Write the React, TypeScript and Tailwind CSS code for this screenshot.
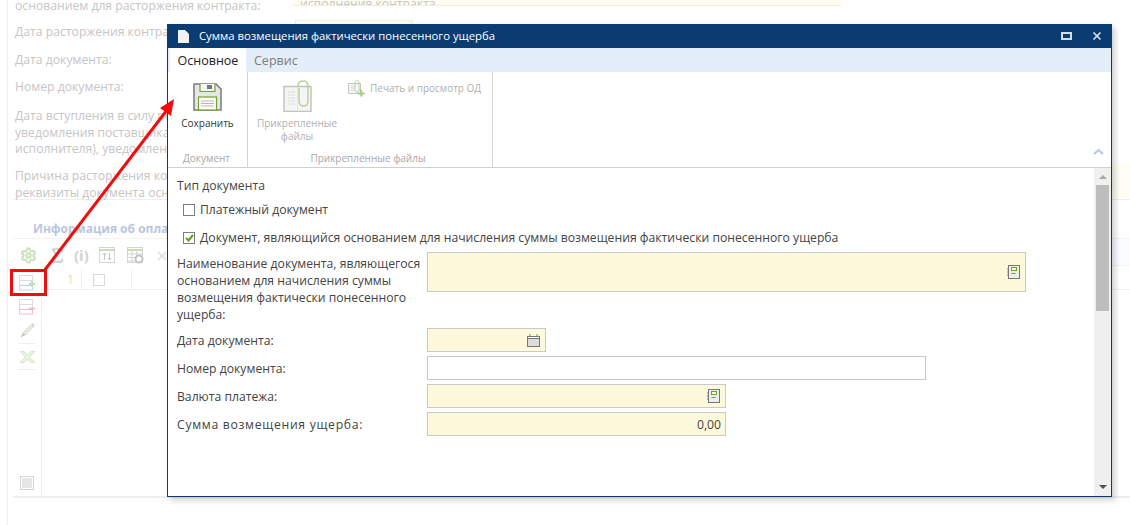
import { Settings, Sigma, X } from "lucide-react";

function BookIcon() {
  return (
    <svg width="14" height="15" viewBox="0 0 14 15" fill="none">
      <rect x="1.500" y="0.500" width="11" height="13" fill="#eeeeee" stroke="#777777" />
      <path d="M0 4h2M0 7h2M0 10h2" stroke="#777777" />
      <rect x="4.500" y="2.500" width="5" height="3" fill="#ffffff" stroke="#6aa51e" />
      <path d="M4.500 8.500h4" stroke="#6aa51e" />
    </svg>
  );
}

function CalendarIcon() {
  return (
    <svg width="13" height="13" viewBox="0 0 13 13" fill="none">
      <rect x="0.500" y="2.500" width="12" height="10" fill="#ffffff" stroke="#777777" />
      <rect x="1" y="5" width="11" height="7" fill="#dddddd" />
      <path d="M0.500 4.500h12" stroke="#777777" />
      <path d="M3 0v2.500M10 0v2.500" stroke="#6aa51e" />
    </svg>
  );
}

function SaveIcon() {
  return (
    <svg width="29" height="28" viewBox="0 0 29 28" fill="none">
      <path d="M1 1h22l5 5v21H1z" fill="#e6e6e6" stroke="#7b7b7b" strokeWidth="1.500" />
      <path d="M7 1v7.500h15V1" fill="#f5f5f5" stroke="#6fa52a" strokeWidth="1.200" />
      <rect x="14" y="2" width="5" height="4" fill="#777777" />
      <rect x="5.500" y="14" width="18" height="13" fill="#ffffff" stroke="#6fa52a" strokeWidth="1.200" />
      <path d="M8 18h13M8 20.500h13M8 23h13" stroke="#b5b5b5" />
    </svg>
  );
}

function ClipIcon() {
  return (
    <svg width="29" height="32" viewBox="0 0 29 32" fill="none">
      <path d="M1 6.500h27v25H1z" fill="#f5f5f5" stroke="#c3c3c3" strokeWidth="1.500" />
      <path d="M14.500 7v24" stroke="#e4e4e4" />
      <path d="M5 12h7M5 15h7M5 18h7M5 21h7M5 24h7" stroke="#dedede" />
      <path
        d="M15 6c0-3 2-5 5-5s5 2 5 5v15c0 3-2 5-4.500 5S16 24 16 21V8"
        fill="none"
        stroke="#b5d49a"
        strokeWidth="1.500"
      />
    </svg>
  );
}

function SmallClipIcon() {
  return (
    <svg width="17" height="17" viewBox="0 0 17 17" fill="none">
      <path d="M0.500 3.500h12v10h-12z" fill="#f7f7f7" stroke="#c3c3c3" />
      <path d="M2.500 6h4M2.500 8h4M2.500 10h4" stroke="#d8d8d8" />
      <path d="M7 3c0-1.500 1-2.500 2-2.500s2 1 2 2.500v7c0 1-.5 2-2 2S7 11 7 10V4" stroke="#b5d49a" />
      <path d="M10 13.500h6.500M13.250 10v6.500" stroke="#a5d07c" strokeWidth="2" />
    </svg>
  );
}

function RowsIcon({ accent, sign }: { accent: string; sign: "plus" | "minus" }) {
  return (
    <svg width="16" height="16" viewBox="0 0 16 16" fill="none">
      <rect x="0.500" y="0.500" width="13" height="5" stroke="#dcdcdc" />
      <rect x="0.500" y="5.500" width="13" height="5" stroke="#dcdcdc" />
      <rect x="0.500" y="10.500" width="13" height="4.500" stroke={accent} />
      {sign === "plus" ? (
        <path d="M10 9h6M13 6v6" stroke="#c4dfa8" strokeWidth="2" />
      ) : (
        <path d="M10 9.500h6" stroke="#f3bcc4" strokeWidth="2" />
      )}
    </svg>
  );
}

function PencilIcon() {
  return (
    <svg width="15" height="15" viewBox="0 0 15 15" fill="none">
      <path d="M3 9.500 10.500 2l2.500 2.500L5.500 12z" fill="#e2eed6" stroke="#c8c8c8" strokeWidth="0.500" />
      <path d="m11 1.500 1.500-1 2 2-1 1.500z" fill="#f3b5b5" />
      <path d="M3 9.500 5.500 12 .5 14.500z" fill="#c4c4c4" />
    </svg>
  );
}

function ExcelIcon() {
  return (
    <svg width="17" height="12" viewBox="0 0 17 12" fill="none">
      <path d="M1 .5h4l3.500 3.500L12 .5h4L10.500 6l5.500 5.500h-4L8.500 8 5 11.500H1L6.500 6z" fill="#eaf2e1" stroke="#d5e5c5" />
    </svg>
  );
}

function GridIcon({ arrows }: { arrows?: boolean }) {
  return (
    <svg width="17" height="17" viewBox="0 0 17 17" fill="none">
      <rect x="0.500" y="0.500" width="15" height="15" fill="#ffffff" stroke="#d4d4d4" />
      <path d="M1 3h14" stroke="#c8deb0" strokeWidth="2" />
      {arrows ? (
        <path d="M5.500 13V6M3.500 8l2-2 2 2M10.500 6v7M8.500 11l2 2 2-2" stroke="#c4c4c4" />
      ) : (
        <>
          <path d="M1 7h14M1 10.500h14M1 14h14M5 4v11M9.500 4v11" stroke="#d4d4d4" />
          <circle cx="12" cy="12" r="3.500" fill="#ffffff" stroke="#c4c4c4" strokeWidth="2" />
        </>
      )}
    </svg>
  );
}

function Field({ className, children }: { className: string; children?: React.ReactNode }) {
  return (
    <div className={`flex h-6 items-center justify-end border border-[#c9c9c9] pr-[4px] ${className}`}>
      {children}
    </div>
  );
}

function FormRow({ label, labelClass, children }: { label: string; labelClass?: string; children: React.ReactNode }) {
  return (
    <div className="flex items-center">
      <div className={`w-[250px] shrink-0 whitespace-nowrap ${labelClass ?? ""}`}>{label}</div>
      {children}
    </div>
  );
}

function Background() {
  return (
    <div className="ml-[7px] flex h-[525px] flex-col border-l border-[#f1f1f1] pl-[5px] text-[12.200px] text-[#c6c6c6]">
      <div className="flex h-[18px] items-start">
        <div className="w-[280px] shrink-0 pl-[2px] leading-[12px]">основанием для расторжения контракта:</div>
        <div className="h-[6px] w-[548px] overflow-hidden border-b border-[#f1eed9] bg-[#fffdf2] pl-[7px] leading-[8px]">
          исполнения контракта
        </div>
      </div>
      <div className="flex h-[28px] items-center pl-[2px]">
        <div className="w-[280px] shrink-0 whitespace-nowrap">Дата расторжения контракта:</div>
        <div className="h-[24px] w-[118px] border border-[#f1eed9] bg-[#fffdf2]" />
      </div>
      <div className="flex h-[28px] items-center pl-[2px]">Дата документа:</div>
      <div className="flex h-[27px] items-center pl-[2px]">Номер документа:</div>
      <div className="h-[62px] pt-[7px] pl-[2px] leading-[16.500px] whitespace-nowrap">
        Дата вступления в силу решения
        <br />
        уведомления поставщика (подрядчика,
        <br />
        исполнителя), уведомления заказчика
      </div>
      <div className="flex h-[37px] border-b border-[#efefef]">
        <div className="w-[1099px] shrink-0 pt-[5px] pl-[2px] leading-[16.500px] whitespace-nowrap">
          Причина расторжения контракта,
          <br />
          реквизиты документа основания
        </div>
        <div className="flex-1 bg-[#fffef5]" />
      </div>
      <div className="flex h-[38px] items-end pl-[20px] text-[12px] leading-[18px] font-bold text-[#b9c7de]">
        Информация об оплате
      </div>
      <div className="flex h-[32px]">
        <div className="flex w-[1099px] shrink-0 items-center border-t border-[#f2f2f2] pt-[2px] pl-[7px]">
          <Settings size={17} strokeWidth={3} className="text-[#cfe0bd]" />
          <Sigma size={19} strokeWidth={2.500} className="ml-[11px] text-[#d0d0d0]" />
          <span className="ml-[7px] text-[15px] leading-none font-bold whitespace-nowrap text-[#d2d2d2]">(i)</span>
          <div className="ml-[10px] flex items-center gap-[11px]">
            <GridIcon arrows />
            <GridIcon />
            <X size={14} strokeWidth={3} className="text-[#dde3ec]" />
          </div>
        </div>
        <div className="h-[28px] flex-1 border-y border-[#f2f2f2] bg-[#fbfcff]" />
      </div>
      <div className="flex h-[228px] border-b-2 border-[#eeeeee]">
        <div className="flex w-[29px] shrink-0 flex-col items-center border-r border-[#eeeeee] pt-[5px] pb-[6px]">
          <RowsIcon accent="#b5d8ee" sign="plus" />
          <div className="mt-[8px]">
            <RowsIcon accent="#f3bcc4" sign="minus" />
          </div>
          <div className="mt-[8px]">
            <PencilIcon />
          </div>
          <div className="mt-[5px] mb-[7px] h-px w-[18px] bg-[#eeeeee]" />
          <ExcelIcon />
          <div className="mt-[6px] h-px w-[18px] bg-[#eeeeee]" />
          <div className="mt-auto flex size-[14px] items-center justify-center border border-[#d4d4d4]">
            <div className="size-[10px] bg-[#e6e6e6]" />
          </div>
        </div>
        <div className="flex h-[20px] flex-1 border-b border-[#f0f0f0]">
          <div className="w-[40px] border-r border-[#f0f0f0] pr-[7px] text-right leading-[20px] text-[#e8dcc2]">1</div>
          <div className="flex w-[50px] items-center border-r border-[#f0f0f0] pl-[11px]">
            <div className="size-3 border border-[#d8d8d8]" />
          </div>
        </div>
      </div>
    </div>
  );
}

function Ribbon() {
  return (
    <div className="relative flex h-[96px] shrink-0 border-b border-[#cfcfcf] text-[10px] leading-[13px]">
      <div className="flex w-[80px] flex-col items-center border-r border-[#d4d4d4]">
        <div className="mt-[11px]">
          <SaveIcon />
        </div>
        <div className="mt-[6px] text-[#333333]">Сохранить</div>
        <div className="mt-auto mr-[2px] mb-[2px] text-[#a8a8a8]">Документ</div>
      </div>
      <div className="flex w-[245px] flex-col border-r border-[#d4d4d4]">
        <div className="flex flex-1 text-[#b0b0b0]">
          <div className="ml-[5px] flex w-[88px] flex-col items-center pt-[8px] text-center">
            <ClipIcon />
            <div className="mt-[5px] w-[88px]">
              Прикрепленные
              <br />
              файлы
            </div>
          </div>
          <div className="mt-[8px] ml-[7px] flex items-start gap-[5px] whitespace-nowrap">
            <SmallClipIcon />
            <span className="mt-[2px]">Печать и просмотр ОД</span>
          </div>
        </div>
        <div className="mb-[2px] pr-[4px] text-center text-[#a8a8a8]">Прикрепленные файлы</div>
      </div>
      <svg
        className="absolute top-[76px] right-[7px]"
        width="11"
        height="7"
        viewBox="0 0 11 7"
        fill="none"
        stroke="#b4c6de"
        strokeWidth="2"
      >
        <path d="m1 6 4.500-4 4.500 4" />
      </svg>
    </div>
  );
}

function Form() {
  return (
    <div className="flex-1 pt-[9px] pl-[9px] text-[12.200px] leading-[17px] text-[#444444]">
      <div>Тип документа</div>
      <div className="mt-[7px] ml-[6px] flex items-center gap-[5px]">
        <div className="size-3 border border-[#7d7d7d]" />
        <span>Платежный документ</span>
      </div>
      <div className="mt-[11px] ml-[6px] flex items-center gap-[5px]">
        <div className="flex size-3 items-center justify-center border border-[#7d7d7d]">
          <svg width="9" height="8" viewBox="0 0 9 8" fill="none" stroke="#5f9e1c" strokeWidth="2">
            <path d="m1 4 2.500 2.500L8 1" />
          </svg>
        </div>
        <span>Документ, являющийся основанием для начисления суммы возмещения фактически понесенного ущерба</span>
      </div>
      <div className="mt-[6px] flex items-start">
        <div className="w-[250px] shrink-0 pt-[3px]">
          Наименование документа, являющегося основанием для начисления суммы возмещения фактически понесенного
          ущерба:
        </div>
        <Field className="h-[40px] w-[599px] bg-[#fef9da]">
          <BookIcon />
        </Field>
      </div>
      <div className="mt-[5px] flex flex-col gap-1">
        <FormRow label="Дата документа:">
          <Field className="w-[119px] bg-[#fef9da] pr-[5px]">
            <CalendarIcon />
          </Field>
        </FormRow>
        <FormRow label="Номер документа:">
          <Field className="w-[499px] bg-white" />
        </FormRow>
        <FormRow label="Валюта платежа:">
          <Field className="w-[299px] bg-[#fef9da]">
            <BookIcon />
          </Field>
        </FormRow>
        <FormRow label="Сумма возмещения ущерба:" labelClass="tracking-[0.7px]">
          <Field className="w-[299px] bg-[#fef9da]">0,00</Field>
        </FormRow>
      </div>
    </div>
  );
}

function Scrollbar() {
  return (
    <div className="flex w-[17px] shrink-0 flex-col items-center bg-[#f0f0f0]">
      <div className="mt-[7px] h-0 w-0 border-x-[4px] border-b-[4px] border-x-transparent border-b-[#a8a8a8]" />
      <div className="mt-[6px] h-[126px] w-[13px] bg-[#bdbdbd]" />
      <div className="mt-auto mb-[7px] h-0 w-0 border-x-[4px] border-t-[4px] border-x-transparent border-t-[#505050]" />
    </div>
  );
}

function Dialog() {
  return (
    <div className="absolute top-[24px] left-[167px] flex h-[473px] w-[945px] flex-col border-x border-b border-[#0a3c72] bg-white shadow-[3px_3px_6px_rgba(0,0,0,0.2)]">
      <div className="flex h-6 shrink-0 items-center bg-[#0a3c72] pr-[8px] pl-[10px] text-[11.300px] text-white">
        <svg width="11" height="13" viewBox="0 0 11 13" className="mr-[10px]">
          <path d="M0 0h7l4 4v9H0z" fill="#f2f2f2" />
        </svg>
        <span>Сумма возмещения фактически понесенного ущерба</span>
        <div className="ml-auto h-[8px] w-[11px] border-2 border-[#d5dde6]" />
        <X size={12} strokeWidth={3.500} className="ml-[19px] text-[#d5dde6]" />
      </div>
      <div className="flex h-6 shrink-0 bg-[#e4eef8] pl-[2px] text-[12.500px] leading-[26px]">
        <div className="w-[76px] bg-white text-center text-[#222222]">Основное</div>
        <div className="ml-[8px] text-[#7d7d7d]">Сервис</div>
      </div>
      <Ribbon />
      <div className="flex min-h-0 flex-1">
        <Form />
        <Scrollbar />
      </div>
    </div>
  );
}

export default function App() {
  return (
    <div className="relative h-[525px] w-[1130px] overflow-hidden bg-white font-['Open_Sans',sans-serif]">
      <Background />
      <Dialog />
      <div className="absolute top-[269px] left-[10px] h-[27px] w-[37px] border-[3px] border-[#f10d0d]" />
      <svg className="absolute top-0 left-0" width="1130" height="525" fill="none">
        <path d="M44 271 167 110" stroke="#f10d0d" strokeWidth="3" />
        <path d="m174 99-3 17-11-8z" fill="#f10d0d" />
      </svg>
    </div>
  );
}
